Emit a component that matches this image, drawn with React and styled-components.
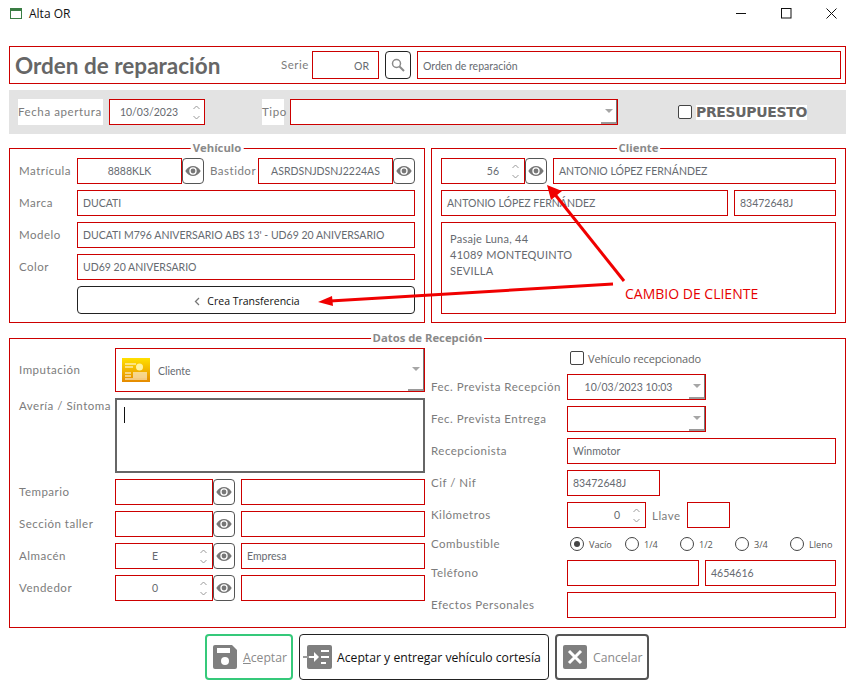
import React from 'react';
import styled, { createGlobalStyle } from 'styled-components';

const RED = '#cc0000';
const INK = '#666a70';
const LABEL = '#7c7c7c';
const FONT = '"Lato", "Open Sans", sans-serif';

const Global = createGlobalStyle`
  html, body { margin: 0; padding: 0; background: #fff; }
  body { font-family: ${FONT}; }
  * { box-sizing: border-box; }
`;

const Page = styled.div`
  position: relative;
  width: 854px;
  height: 687px;
  overflow: hidden;
  background: #fff;
`;

const TitleBar = styled.header`
  height: 46px;
  padding: 8px 17px 0 10px;
  display: flex;
  align-items: flex-start;
  gap: 7px;
`;
const TitleText = styled.span`
  font: 12px/12px "Open Sans", sans-serif;
  color: #111;
  flex: 1;
`;
const WinControls = styled.div`
  display: flex;
  gap: 34px;
`;

const Content = styled.main`
  padding: 0 8px 0 9px;
  display: flex;
  flex-direction: column;
`;

const HeaderBox = styled.section`
  height: 38px;
  border: 1px solid ${RED};
  padding: 4px 4px 4px 5px;
  display: flex;
  align-items: center;
  gap: 6px;
`;
const BigTitle = styled.h1`
  margin: 0;
  padding-top: 2px;
  width: 260px;
  font: 700 22.5px/28px ${FONT};
  letter-spacing: 0;
  color: #666;
  white-space: nowrap;
`;

const ToolBar = styled.section`
  height: 44px;
  margin-top: 6px;
  background: #e3e3e3;
  padding: 9px;
  display: flex;
  align-items: center;
  gap: 6px;
`;
const BoxLabel = styled.span`
  width: ${p => p.$w}px;
  height: 26px;
  margin-left: ${p => p.$ml || 0}px;
  padding-bottom: 2px;
  background: #fff;
  display: flex;
  align-items: center;
  font-size: 11.5px;
  letter-spacing: 0.6px;
  color: ${LABEL};
  white-space: nowrap;
`;
const Presupuesto = styled.label`
  margin-left: 54px;
  display: flex;
  align-items: center;
  gap: 4px;
  font: 700 14px/15px "DejaVu Sans", sans-serif;
  letter-spacing: -0.35px;
  color: #666;
  span { background: #fff; }
`;

const Columns = styled.div`
  display: grid;
  grid-template-columns: 416px 415px;
  gap: 6px;
  margin-top: 14px;
`;

const Group = styled.section`
  position: relative;
  height: ${p => p.$h}px;
  border: 1px solid ${RED};
  padding: 9px;
  margin-top: ${p => p.$mt || 0}px;
`;
const Legend = styled.h2`
  position: absolute;
  top: -8px;
  left: 50%;
  transform: translateX(-50%);
  margin: 0;
  padding: 0 2px;
  background: #fff;
  font: 700 11.3px/14px "Open Sans", sans-serif;
  color: #8a8a8a;
  white-space: nowrap;
`;

const Stack = styled.div`
  display: flex;
  flex-direction: column;
  gap: 6px;
`;
const Row = styled.div`
  display: flex;
  align-items: ${p => p.$top ? 'flex-start' : 'center'};
  gap: 6px;
  min-height: ${p => p.$h || 26}px;
`;
const Label = styled.label`
  flex: none;
  width: ${p => p.$w || 52}px;
  font-size: 11.5px;
  line-height: 16px;
  letter-spacing: 0.5px;
  color: ${LABEL};
  white-space: nowrap;
`;

const Field = styled.div`
  flex: ${p => p.$grow ? '1 1 0' : 'none'};
  width: ${p => p.$w ? `${p.$w}px` : 'auto'};
  min-width: 0;
  height: ${p => p.$h || 26}px;
  border: 1px solid ${RED};
  background: #fff;
  display: flex;
  align-items: center;
  color: ${INK};
  font-size: 10.5px;
  white-space: nowrap;
`;
const Value = styled.span`
  flex: 1;
  min-width: 0;
  margin-top: ${p => p.$mt || 0}px;
  padding: ${p => p.$right ? `0 ${p.$pr ?? 7}px 0 0` : p.$center ? '0' : `0 0 0 ${p.$pl ?? 5}px`};
  text-align: ${p => p.$right ? 'right' : p.$center ? 'center' : 'left'};
`;
const Spin = styled.span`
  flex: none;
  width: ${p => p.$w || 18}px;
  height: 100%;
  display: flex;
  flex-direction: column;
  align-items: center;
  justify-content: center;
  gap: 5px;
`;
const ComboEnd = styled.span`
  flex: none;
  width: 16px;
  height: 100%;
  display: flex;
  align-items: center;
  justify-content: center;
  border-right: 1px solid #777;
  border-bottom: 2px solid #9a9a9a;
  &::before {
    content: '';
    border-left: 4px solid transparent;
    border-right: 4px solid transparent;
    border-top: 4px solid #a6a6a6;
  }
`;
const IconBtn = styled.button`
  flex: none;
  width: ${p => p.$w || 22}px;
  height: ${p => p.$h || 26}px;
  padding: 0;
  border: 1px solid ${p => p.$dark ? '#222' : '#555'};
  border-radius: 4px;
  background: #fff;
  display: flex;
  align-items: center;
  justify-content: center;
`;
const Attached = styled.div`
  display: flex;
  align-items: center;
  flex: none;
`;
const WideBtn = styled.button`
  margin-left: 58px;
  width: 338px;
  height: 28px;
  padding: 2px 0 0 2px;
  border: 1px solid #222;
  border-radius: 4px;
  background: #fff;
  display: flex;
  align-items: center;
  justify-content: center;
  gap: 7px;
  font: 10.5px "Open Sans", sans-serif;
  color: #111;
`;
const Address = styled.div`
  height: 92px;
  border: 1px solid ${RED};
  padding: 8px;
  font-size: 11px;
  line-height: 16px;
  letter-spacing: 0.25px;
  color: ${INK};
`;

const DataGrid = styled.div`
  display: grid;
  grid-template-columns: 406px 405px;
  gap: 6px;
`;
const CardIcon = styled.svg`
  flex: none;
  margin: 0 8px 0 6px;
`;
const Symptom = styled.div`
  flex: none;
  width: 310px;
  height: 75px;
  border: 2px solid #666;
  padding: 7px;
`;
const Caret = styled.div`
  width: 1px;
  height: 16px;
  background: #111;
`;
const CheckBox = styled.span`
  flex: none;
  width: 14px;
  height: 14px;
  border: 1px solid #444;
  border-radius: 2px;
  background: #fff;
`;
const Received = styled.label`
  margin-left: 139px;
  display: flex;
  align-items: center;
  gap: 4px;
  font: 11px "Open Sans", sans-serif;
  color: #666;
  letter-spacing: -0.15px;
`;
const Radios = styled.div`
  display: grid;
  grid-template-columns: repeat(5, 55px);
  margin-left: 3px;
`;
const RadioItem = styled.label`
  display: flex;
  align-items: center;
  gap: 5px;
  font: 9.2px "Open Sans", sans-serif;
  color: #555;
`;
const RadioDot = styled.span`
  flex: none;
  width: 14px;
  height: 14px;
  border: 1px solid #444;
  border-radius: 50%;
  display: flex;
  align-items: center;
  justify-content: center;
  &::after {
    content: '';
    width: 6px;
    height: 6px;
    border-radius: 50%;
    background: ${p => p.$on ? '#444' : 'transparent'};
  }
`;
const InlineLabel = styled.span`
  font-size: 11.5px;
  letter-spacing: 0.5px;
  color: ${LABEL};
`;

const Footer = styled.footer`
  height: 46px;
  margin-top: 6px;
  padding-right: 1px;
  display: flex;
  justify-content: center;
  gap: 6px;
`;
const ActionBtn = styled.button`
  flex: none;
  width: ${p => p.$w}px;
  padding: 0 0 0 ${p => p.$pl || 6}px;
  border: ${p => p.$bw || 1}px solid ${p => p.$color};
  border-radius: 4px;
  background: #fff;
  display: flex;
  align-items: center;
  gap: ${p => p.$gap || 6}px;
  font: 12.2px "Open Sans", sans-serif;
  color: ${p => p.$ink};
  white-space: nowrap;
  u { text-decoration-thickness: 1px; }
`;

const Overlay = styled.svg`
  position: absolute;
  inset: 0;
  pointer-events: none;
`;
const Note = styled.span`
  position: absolute;
  left: 625px;
  top: 285px;
  font: 14px/18px "Open Sans", sans-serif;
  color: #e60000;
  white-space: nowrap;
`;

const Eye = () => (
  <svg width="16" height="12" viewBox="0 0 16 12" aria-hidden="true">
    <path d="M0.3 6C2.3 2.6 5 1 8 1s5.7 1.6 7.7 5c-2 3.4-4.7 5-7.7 5S2.3 9.4.3 6z" fill="#777" />
    <circle cx="8" cy="6" r="3.7" fill="#fff" />
    <circle cx="8" cy="6" r="2.4" fill="#777" />
  </svg>
);
const Chevron = ({ up }) => (
  <svg width="7" height="5" viewBox="0 0 7 5" aria-hidden="true">
    <path d={up ? 'M.5 4 3.5 1 6.5 4' : 'M.5 1 3.5 4 6.5 1'} fill="none" stroke="#999" strokeWidth="1" />
  </svg>
);
const Spinner = ({ w }) => (
  <Spin $w={w}><Chevron up /><Chevron /></Spin>
);
const EyeBtn = () => <IconBtn aria-label="ver"><Eye /></IconBtn>;

const App = () => (
  <Page>
    <Global />
    <TitleBar>
      <svg width="12" height="11" viewBox="0 0 12 11" aria-hidden="true">
        <rect x=".5" y=".5" width="11" height="10" fill="#fff" stroke="#3a7d44" />
        <rect x="1" y="1" width="10" height="2" fill="#3a7d44" />
      </svg>
      <TitleText>Alta OR</TitleText>
      <WinControls>
        <svg width="11" height="11" viewBox="0 0 11 11" aria-hidden="true"><path d="M0 5.5h10" stroke="#111" /></svg>
        <svg width="11" height="11" viewBox="0 0 11 11" aria-hidden="true"><rect x=".5" y=".5" width="9.5" height="9.5" fill="none" stroke="#111" /></svg>
        <svg width="11" height="11" viewBox="0 0 11 11" aria-hidden="true"><path d="M.5.5l10 10M10.5.5l-10 10" stroke="#111" /></svg>
      </WinControls>
    </TitleBar>
    <Content>
      <HeaderBox>
        <BigTitle>Orden de reparación</BigTitle>
        <Label $w={25}>Serie</Label>
        <Field $w={67} $h={28}><Value $right $pr={9} $mt={2}>OR</Value></Field>
        <IconBtn $w={26} $h={28} $dark aria-label="buscar">
          <svg width="14" height="14" viewBox="0 0 14 14" aria-hidden="true">
            <circle cx="5.5" cy="5.5" r="4" fill="none" stroke="#8a8a8a" strokeWidth="1.5" />
            <path d="M8.5 8.5 13 13" stroke="#8a8a8a" strokeWidth="2" />
          </svg>
        </IconBtn>
        <Field $grow $h={28}><Value $mt={2}>Orden de reparación</Value></Field>
      </HeaderBox>

      <ToolBar>
        <BoxLabel $w={85}>Fecha apertura</BoxLabel>
        <Field $w={96}><Value $center>10/03/2023</Value><Spinner w={16} /></Field>
        <BoxLabel $w={22} $ml={51}>Tipo</BoxLabel>
        <Field $w={328}><Value /><ComboEnd /></Field>
        <Presupuesto><CheckBox /><span>PRESUPUESTO</span></Presupuesto>
      </ToolBar>

      <Columns>
        <Group $h={175}>
          <Legend>Vehículo</Legend>
          <Stack>
            <Row>
              <Label>Matrícula</Label>
              <Attached>
                <Field $w={105}><Value $center>8888KLK</Value></Field>
                <EyeBtn />
              </Attached>
              <Label $w={42}>Bastidor</Label>
              <Attached>
                <Field $w={135}><Value $center>ASRDSNJDSNJ2224AS</Value></Field>
                <EyeBtn />
              </Attached>
            </Row>
            <Row><Label>Marca</Label><Field $w={338}><Value>DUCATI</Value></Field></Row>
            <Row><Label>Modelo</Label><Field $w={338}><Value>DUCATI M796 ANIVERSARIO ABS 13' - UD69 20 ANIVERSARIO</Value></Field></Row>
            <Row><Label>Color</Label><Field $w={338}><Value>UD69 20 ANIVERSARIO</Value></Field></Row>
            <WideBtn>
              <svg width="6" height="9" viewBox="0 0 6 9" aria-hidden="true"><path d="M5 1 1.5 4.5 5 8" fill="none" stroke="#777" strokeWidth="1.3" /></svg>
              Crea Transferencia
            </WideBtn>
          </Stack>
        </Group>

        <Group $h={175}>
          <Legend>Cliente</Legend>
          <Stack>
            <Row>
              <Attached>
                <Field $w={84}><Value $right>56</Value><Spinner /></Field>
                <EyeBtn />
              </Attached>
              <Field $grow><Value>ANTONIO LÓPEZ FERNÁNDEZ</Value></Field>
            </Row>
            <Row>
              <Field $w={287}><Value>ANTONIO LÓPEZ FERNÁNDEZ</Value></Field>
              <Field $grow><Value>83472648J</Value></Field>
            </Row>
            <Address>
              Pasaje Luna, 44<br />41089 MONTEQUINTO<br />SEVILLA
            </Address>
          </Stack>
        </Group>
      </Columns>

      <Group $mt={15} $h={290}>
        <Legend>Datos de Recepción</Legend>
        <DataGrid>
          <Stack>
            <Row $h={44}>
              <Label $w={90}>Imputación</Label>
              <Field $w={310} $h={44}>
                <CardIcon width="28" height="24" viewBox="0 0 28 24" aria-hidden="true">
                  <defs>
                    <linearGradient id="card" x1="0" y1="0" x2="0" y2="1">
                      <stop offset="0" stopColor="#ffe000" />
                      <stop offset="1" stopColor="#e58a00" />
                    </linearGradient>
                  </defs>
                  <rect width="28" height="24" fill="url(#card)" />
                  <path d="M3 6h11M3 9h8M3 15h6M3 18h6M3 21h22" stroke="#fff" strokeWidth="1.2" />
                  <circle cx="17.5" cy="9" r="3.5" fill="#fff3a0" />
                  <rect x="11" y="14" width="14" height="6" fill="#fff" opacity=".55" />
                </CardIcon>
                <Value $pl={0} $mt={2}>Cliente</Value>
                <ComboEnd />
              </Field>
            </Row>
            <Row $top $h={75}>
              <Label $w={90}>Avería / Síntoma</Label>
              <Symptom><Caret /></Symptom>
            </Row>
            <Row>
              <Label $w={90}>Tempario</Label>
              <Attached><Field $w={98} /><EyeBtn /></Attached>
              <Field $grow />
            </Row>
            <Row>
              <Label $w={90}>Sección taller</Label>
              <Attached><Field $w={98} /><EyeBtn /></Attached>
              <Field $grow />
            </Row>
            <Row>
              <Label $w={90}>Almacén</Label>
              <Attached><Field $w={98}><Value $center>E</Value><Spinner /></Field><EyeBtn /></Attached>
              <Field $grow><Value>Empresa</Value></Field>
            </Row>
            <Row>
              <Label $w={90}>Vendedor</Label>
              <Attached><Field $w={98}><Value $center>0</Value><Spinner /></Field><EyeBtn /></Attached>
              <Field $grow />
            </Row>
          </Stack>

          <Stack>
            <Row $h={20}><Received><CheckBox />Vehículo recepcionado</Received></Row>
            <Row><Label $w={130}>Fec. Prevista Recepción</Label><Field $w={139}><Value $center>10/03/2023 10:03</Value><ComboEnd /></Field></Row>
            <Row><Label $w={130}>Fec. Prevista Entrega</Label><Field $w={139}><Value /><ComboEnd /></Field></Row>
            <Row><Label $w={130}>Recepcionista</Label><Field $grow><Value>Winmotor</Value></Field></Row>
            <Row><Label $w={130}>Cif / Nif</Label><Field $w={93}><Value>83472648J</Value></Field></Row>
            <Row>
              <Label $w={130}>Kilómetros</Label>
              <Field $w={79}><Value $right>0</Value><Spinner /></Field>
              <InlineLabel>Llave</InlineLabel>
              <Field $w={43} />
            </Row>
            <Row $h={20}>
              <Label $w={130}>Combustible</Label>
              <Radios>
                <RadioItem><RadioDot $on />Vacío</RadioItem>
                <RadioItem><RadioDot />1/4</RadioItem>
                <RadioItem><RadioDot />1/2</RadioItem>
                <RadioItem><RadioDot />3/4</RadioItem>
                <RadioItem><RadioDot />Lleno</RadioItem>
              </Radios>
            </Row>
            <Row><Label $w={130}>Teléfono</Label><Field $w={132} /><Field $grow><Value>4654616</Value></Field></Row>
            <Row><Label $w={130}>Efectos Personales</Label><Field $grow /></Row>
          </Stack>
        </DataGrid>
      </Group>

      <Footer>
        <ActionBtn $w={88} $bw={2} $color="#35c97a" $ink="#8a8a8a">
          <svg width="24" height="24" viewBox="0 0 24 24" aria-hidden="true">
            <path d="M2 0h17l5 5v17a2 2 0 0 1-2 2H2a2 2 0 0 1-2-2V2a2 2 0 0 1 2-2z" fill="#7f7f7f" />
            <rect x="4" y="3" width="13" height="5" fill="#fff" />
            <circle cx="12" cy="16" r="4" fill="#fff" />
          </svg>
          <span><u>A</u>ceptar</span>
        </ActionBtn>
        <ActionBtn $w={250} $pl={3} $gap={5} $color="#222" $ink="#111">
          <svg width="29" height="24" viewBox="0 0 29 24" aria-hidden="true">
            <rect x="4" y="0" width="25" height="24" rx="2" fill="#7f7f7f" />
            <path d="M0 12h6" stroke="#9a9a9a" strokeWidth="2" />
            <path d="M6 12h6" stroke="#fff" strokeWidth="2" />
            <path d="M11 7l5 5-5 5z" fill="#fff" />
            <path d="M18 6h8M18 12h8M18 18h5" stroke="#fff" strokeWidth="2" />
          </svg>
          Aceptar y entregar vehículo cortesía
        </ActionBtn>
        <ActionBtn $w={94} $bw={2} $color="#555" $ink="#8a8a8a">
          <svg width="24" height="24" viewBox="0 0 24 24" aria-hidden="true">
            <rect width="24" height="24" rx="2" fill="#7f7f7f" />
            <path d="M6 6l12 12M18 6 6 18" stroke="#fff" strokeWidth="3" />
          </svg>
          Cancelar
        </ActionBtn>
      </Footer>
    </Content>

    <Overlay width="854" height="687" viewBox="0 0 854 687" aria-hidden="true">
      <path d="M624 281 553 192" stroke="#f00000" strokeWidth="3" />
      <path d="M547 185 551 200 562 191z" fill="#f00000" />
      <path d="M613 284 330 301" stroke="#f00000" strokeWidth="3" />
      <path d="M318 302 332 296 333 306z" fill="#f00000" />
    </Overlay>
    <Note>CAMBIO DE CLIENTE</Note>
  </Page>
);

export default App;
